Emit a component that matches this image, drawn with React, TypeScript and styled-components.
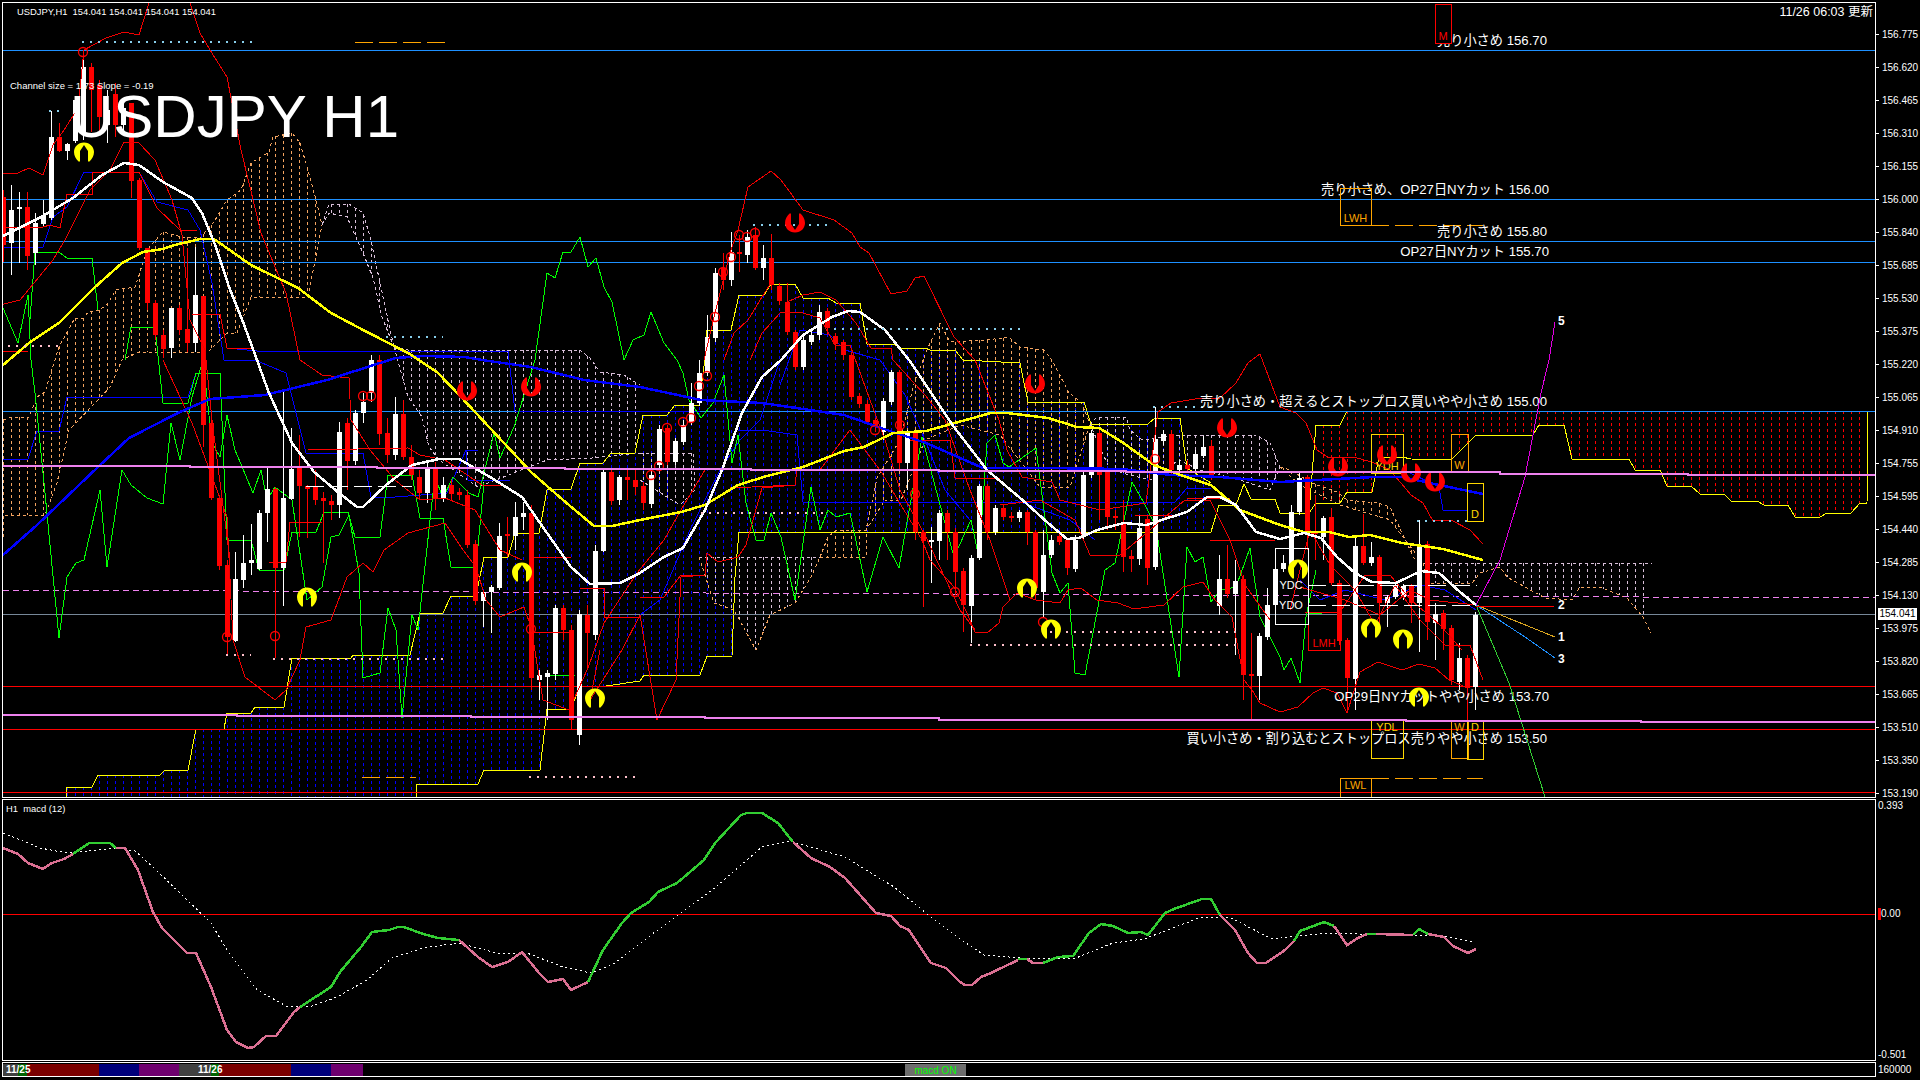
import { createGlobalStyle, styled } from "styled-components";

const UI_FONT = `"Liberation Sans", "Noto Sans CJK JP", sans-serif`;

// [white?, body top, body bottom, high, low], one bar every 8px from x = 3.5
const CANDLES: number[][] = [
  [0,197,245,190,262],[1,210,243,185,275],[1,207,208,192,263],[0,207,256,192,270],[1,223,253,213,265],[1,216,224,200,227],[1,137,218,111,220],[0,137,151,123,152],[1,144,151,143,160],[1,100,141,100,143],
  [1,67,133,50,140],[0,67,90,63,132],[0,85,117,80,133],[1,110,125,90,143],[0,94,125,83,137],[1,108,125,100,135],[0,103,181,103,198],[0,180,248,178,250],[0,248,303,248,310],[0,303,335,300,340],
  [0,335,349,330,358],[1,308,348,308,358],[0,308,330,305,335],[0,329,343,248,352],[1,295,343,247,352],[0,296,425,296,447],[0,423,498,420,500],[0,498,566,495,570],[0,565,637,560,655],[1,579,641,552,642],
  [1,563,580,535,588],[1,560,563,524,575],[1,513,569,510,570],[1,489,513,468,542],[0,489,568,487,658],[1,498,568,390,606],[1,469,499,428,500],[0,468,486,435,537],[0,486,489,485,538],[0,487,500,470,505],
  [0,498,501,492,563],[0,501,505,495,520],[1,432,505,422,518],[0,423,461,418,490],[1,413,461,410,465],[1,402,413,393,423],[1,360,393,355,402],[0,360,434,355,445],[0,433,455,418,463],[1,414,455,397,460],
  [0,414,457,400,460],[0,457,475,445,480],[0,477,493,470,500],[1,468,493,460,503],[0,468,498,462,510],[1,485,498,477,502],[0,485,494,480,500],[0,492,495,488,500],[0,495,545,490,548],[0,544,601,540,605],
  [1,592,601,590,627],[1,587,592,585,633],[1,536,588,523,590],[0,534,536,517,557],[1,517,536,502,550],[1,513,517,502,530],[0,513,678,505,690],[1,675,680,670,700],[1,673,677,670,720],[1,608,674,605,680],
  [0,608,630,605,640],[0,630,720,625,730],[1,614,735,610,745],[0,615,633,605,668],[1,551,635,545,640],[1,472,551,470,552],[0,472,501,470,505],[1,477,500,475,505],[0,477,480,470,500],[0,480,487,470,495],
  [0,486,503,482,510],[1,475,504,470,508],[1,429,465,425,468],[0,428,462,425,465],[1,441,462,438,465],[1,425,442,420,445],[1,403,422,383,425],[1,373,403,360,406],[1,337,373,315,376],[1,273,338,268,342],
  [0,268,280,253,290],[1,252,280,232,286],[0,252,254,235,272],[1,237,255,230,263],[0,235,268,227,270],[1,258,268,245,280],[0,258,285,234,290],[0,286,301,283,305],[0,302,332,283,335],[0,332,367,330,370],
  [1,340,367,335,370],[1,335,342,330,345],[1,312,335,305,340],[0,311,328,308,335],[0,336,344,333,350],[0,342,355,340,360],[0,355,397,352,400],[0,396,404,393,408],[0,404,422,400,425],[0,420,427,418,432],
  [1,401,432,398,440],[1,372,402,370,405],[0,372,463,370,470],[1,433,463,430,490],[0,433,532,430,540],[0,532,541,530,607],[1,540,541,527,583],[1,513,541,510,560],[0,513,532,510,560],[0,532,572,528,595],
  [0,571,605,568,632],[1,558,606,555,643],[1,486,558,484,560],[0,486,532,484,540],[1,508,532,505,535],[0,508,517,505,520],[0,516,518,512,522],[1,512,518,510,522],[0,512,532,510,545],[0,532,588,530,600],
  [1,555,592,530,618],[1,540,555,535,558],[0,536,542,534,545],[0,540,568,538,575],[1,540,569,535,572],[1,475,537,470,540],[1,433,475,430,478],[0,433,475,430,520],[0,472,517,470,530],[0,516,518,510,530],
  [0,522,557,500,572],[0,556,559,550,572],[1,528,559,515,565],[0,519,568,515,585],[1,439,567,407,570],[1,434,441,430,445],[0,434,470,430,475],[1,465,470,460,475],[0,465,469,460,473],[1,454,469,450,473],
  [1,447,456,436,458],[0,446,477,440,480],[1,579,606,555,615],[0,579,594,545,598],[1,581,594,560,655],[0,579,675,575,700],[0,674,676,633,720],[1,636,676,633,700],[1,605,637,588,640],[1,569,605,550,610],
  [1,563,569,555,572],[1,512,565,505,570],[1,478,512,473,515],[0,477,533,475,550],[0,532,534,495,560],[1,518,537,516,560],[0,517,583,508,585],[0,583,641,580,645],[0,640,678,638,713],[1,546,679,537,710],
  [0,546,563,514,565],[1,557,563,542,566],[0,557,603,555,625],[1,597,603,595,627],[1,586,597,584,599],[1,586,597,584,600],[0,586,603,584,623],[1,546,603,520,652],[0,544,622,541,640],[1,614,623,603,660],
  [0,613,629,610,650],[0,628,680,625,685],[1,658,682,643,690],[0,658,688,655,722],[1,615,687,612,710],
];

const CANDLE_X = (k: number) => 3.5 + 8 * k;

const SPAN_A = "66,797 66,787 92,787 98,775 160,775 165,770 188,770 196,729 224,729 227,713 251,713 255,707 284,707 292,658 351,658 353,655 410,655 420,613 443,613 451,596 476,596 484,557 508,557 515,533 539,533 547,490 571,489 580,463 603,463 611,453 635,453 643,415 667,415 675,405 699,405 705,358 707,330 731,330 739,295 764,295 771,284 795,284 803,298 828,298 836,303 860,303 867,344 893,344 901,348 926,348 930,350 955,350 963,360 1020,363 1028,402 1084,402 1091,424 1148,424 1155,418 1180,418 1187,468 1211,483";
const SPAN_B = "416,800 416,784 478,784 484,770 540,770 547,709 571,709 580,686 606,686 640,681 644,675 700,675 707,656 732,656 735,577 739,532 1211,532";
const SPAN_C = "1211,532 1219,505 1236,505 1244,484 1251,499 1275,499 1280,513 1309,513 1316,425 1340,425 1347,411 1868,411";
const SPAN_D = "1309,513 1316,503 1340,503 1347,492 1372,492 1379,457 1402,457 1411,459 1451,460 1476,435 1533,435 1539,425 1564,425 1572,459 1629,459 1635,470 1660,470 1667,486 1691,486 1700,494 1724,494 1731,501 1757,501 1764,505 1788,505 1795,517 1820,517 1827,513 1851,513 1860,503 1867,503 1868,411";

const PEACH = "#f4a460";
const THISTLE = "#d8bfd8";

// hourly cloud: vertical dashes between two outlines
const CLOUDS = [
  { color: PEACH, edge: PEACH,
    top: "3,420 12,417 29,417 37,397 45,392 59,347 75,318 84,318 88,312 100,310 108,303 116,290 135,287 147,250 163,232 182,237 200,238 214,222 227,200 241,190 251,163 269,152 273,137 292,133 300,143 308,170 316,200 322,225",
    bottom: "3,537 3,515 45,515 57,483 69,430 98,400 110,387 122,360 139,352 208,352 227,333 237,333 251,297 308,297 322,225" },
  { color: THISTLE, edge: THISTLE,
    top: "322,225 329,204 349,204 363,213 371,240 380,283 388,320 394,347",
    bottom: "322,225 329,213 347,217 363,253 373,278 382,317 394,347" },
  { color: THISTLE, edge: THISTLE,
    top: "394,347 408,350 580,350 590,358 600,372 624,375 640,385",
    bottom: "394,347 408,397 422,417 429,447 439,460 478,487 547,460 592,458 640,453" },
  { color: THISTLE, edge: THISTLE,
    top: "640,453 693,453 695,490",
    bottom: "640,480 680,505 695,490" },
  { color: THISTLE, edge: PEACH,
    top: "699,557 820,557",
    bottom: "699,557 714,603 734,610 756,650 770,615 795,603 811,577 820,557" },
  { color: PEACH, edge: PEACH,
    top: "820,557 828,537 836,530 866,530 877,478 900,440 915,380 930,343 940,323 950,342 987,340 1009,337 1020,347 1044,350 1052,360 1069,393 1081,402 1090,424",
    bottom: "820,557 866,557 866,530 885,500 901,500 925,440 960,425 1000,435 1040,487 1070,487 1090,424" },
  { color: THISTLE, edge: THISTLE,
    top: "1090,424 1097,417 1126,417 1130,430 1142,440 1179,435 1256,435 1270,443 1280,467",
    bottom: "1090,424 1110,470 1150,480 1179,460 1200,470 1240,480 1270,490 1280,467" },
  { color: PEACH, edge: PEACH,
    top: "1280,467 1290,470 1312,483 1337,492 1347,500 1378,503 1390,507 1402,533 1415,560 1423,563",
    bottom: "1280,467 1300,485 1340,505 1390,520 1423,563" },
  { color: THISTLE, edge: PEACH,
    top: "1423,563 1652,563",
    bottom: "1423,563 1427,583 1472,583 1480,573 1500,567 1507,577 1525,587 1545,598 1572,600 1580,587 1602,588 1627,598 1643,617 1651,633" },
];

const RED_THIN = [
  "3,173 18,173 29,168 43,175 53,145 64,130 78,108 84,50 106,38 124,32 139,35 149,3",
  "190,3 200,33 210,50 227,77 241,150 249,183 261,233 286,293 300,360 322,375 349,378 351,420 370,450 395,480 420,500 445,498 475,510 500,550 522,560",
  "0,305 20,300 53,260 66,238 90,190 110,170 124,142 138,142 155,160 172,200 182,235 190,320 205,350 212,420 230,560",
  "163,360 192,423 227,517 233,640 245,677 275,700 286,690 300,660 306,627 331,620 347,577 363,563 373,572 384,550 408,533 445,523 461,547 476,567 486,600 500,617 524,607 531,627 543,700 569,710 588,668 604,623 637,573 664,540 681,510 705,470",
  "600,650 590,700 622,650 640,615 657,720 676,680 681,577 705,575 707,553 718,562 738,557 746,545 762,488 795,485 797,470 820,470 850,430 880,470 922,540 930,560 954,587 967,613 975,632 987,633 999,623 1003,607 1017,593 1036,600 1060,603 1068,590 1081,588 1097,600 1118,603 1134,609 1164,605 1183,587 1203,582 1215,600 1232,617 1244,680 1252,690 1260,703 1280,712 1298,707 1313,693 1323,688 1337,693 1347,713 1360,672 1378,662 1402,670 1419,664 1435,668 1449,680 1468,688",
  "704,360 715,313 730,253 738,230 748,187 771,171 781,180 803,210 834,220 852,233 860,247 869,253 891,294 907,291 915,278 924,276 954,337 975,360 999,420 1007,450 1022,477 1052,482 1060,500 1100,510 1146,503 1158,412 1171,403 1195,399 1220,398 1236,383 1248,363 1260,354 1280,407 1296,413 1306,423 1317,450 1329,458 1353,457 1372,462 1390,470 1411,495 1423,503 1433,521 1451,520 1470,530 1483,544",
  "724,360 734,333 748,320 762,297 771,283",
  "750,360 762,333 781,312 803,313 820,318 835,345 850,345 870,400 885,440 900,490 925,535 960,610 975,630",
  "787,302 803,295 820,292 836,300 856,323 871,348 891,348 893,360 925,395 945,420 970,490 990,540 1010,600",
  "1000,505 1040,500 1075,520 1090,555 1120,555 1150,530 1185,500 1210,500 1230,540 1245,585 1270,620",
  "1290,610 1310,530 1330,565 1355,590 1375,625 1395,585 1420,620 1445,645 1470,645 1483,680",
  "1305,612 1340,612 1365,575 1390,575 1411,600 1440,625 1462,650",
  "1300,587 1345,600 1380,615 1410,590 1430,600 1476,605",
];

const RED_STEP = [
  "3,227 43,227 50,225 60,228 67,194 92,194 92,172 139,172 157,208 180,230 197,230",
  "3,351 28,351",
  "192,314 220,314 227,348 251,348",
  "269,562 286,562 290,522 322,522",
  "308,450 408,448 420,455 445,460 482,485 506,485",
  "533,557 571,557",
  "531,632 570,632",
  "580,588 604,588 604,617 640,617",
  "640,597 664,597 681,575 705,575",
  "730,488 795,485",
  "910,440 950,440 955,478 1000,478",
  "1135,515 1175,515",
  "1187,498 1230,498",
  "1210,540 1275,540",
];

const BLUE_THIN = [
  "3,247 43,247 53,217 67,207 84,172 139,172 157,202 188,210 200,230 212,283 224,360 255,360 286,373 306,453 363,453 371,497 395,497 447,493 466,450 478,450",
  "466,450 468,480 510,480",
  "780,360 760,420 740,440 720,470 690,530 660,600 640,615",
  "780,385 800,330 830,335 845,350 880,360 905,395",
  "905,395 925,440 945,490 970,520",
  "1015,500 1070,520 1095,540",
  "1300,580 1320,600 1345,590 1385,600 1420,585 1445,590 1476,610",
];

const BLUE_STEP = [
  "3,459 28,459 37,431 59,431 67,397 188,397 196,373 220,373",
  "227,348 257,351 508,351 515,411 700,411",
  "738,430 762,430 797,435 803,502 1175,502 1187,488 1211,488",
  "1404,470 1439,487 1443,510 1467,510",
];

const GREEN_THIN = "3,308 18,343 28,295 31,360 35,393 45,493 59,638 67,577 76,563 84,560 100,490 107,567 122,470 131,485 147,498 163,504 171,423 180,460 192,397 203,360 212,443 220,457 227,415 235,450 253,493 261,470 267,500 275,487 292,500 307,600 322,587 331,537 339,535 349,515 359,573 363,678 380,673 388,608 396,630 402,718 412,615 418,630 433,493 435,477 443,498 453,477 469,493 478,497 494,433 500,458 514,427 535,360 547,273 555,278 563,252 571,252 580,237 588,267 596,258 604,287 612,302 624,360 633,340 644,335 651,312 664,343 677,360 683,373 689,400 701,418 713,403 724,375 732,463 738,435 746,503 756,540 764,540 771,513 781,537 795,600 811,487 820,530 828,510 836,517 850,513 867,592 883,537 899,568 922,437 954,557 971,520 979,558 987,443 995,435 1003,463 1009,467 1036,448 1052,573 1060,593 1068,583 1075,673 1085,675 1105,570 1115,563 1132,482 1144,503 1156,527 1179,677 1187,547 1195,562 1203,557 1211,602 1220,590 1236,587 1250,548 1260,617 1280,657 1284,670 1291,658 1300,683 1306,617 1316,570";

const GREEN_STEP = [
  "29,333 35,252 59,252 67,258 92,258 98,310",
  "131,327 155,327 163,403 188,403 196,373 220,373 227,540 251,540 259,570 284,570 292,532 316,532 324,512 348,512 355,537 380,537 388,475 412,475 420,518 443,518 451,567 476,567 484,483",
  "125,360 131,327",
  "546,675 575,675",
  "1308,613 1322,613",
];

const WHITE_MA = "3,236 41,217 73,198 102,175 124,163 139,165 163,182 192,198 202,213 216,247 229,287 243,322 257,360 269,393 292,443 314,472 339,493 357,507 363,507 386,485 412,465 439,459 459,459 490,477 522,497 547,533 571,567 590,584 620,583 640,573 664,557 683,548 705,510 722,470 742,413 762,377 781,360 803,335 832,317 848,311 860,312 885,330 909,360 934,397 954,427 987,470 1026,503 1048,523 1067,539 1079,538 1097,530 1124,523 1146,525 1171,517 1187,512 1207,497 1220,497 1236,505 1256,532 1280,539 1304,533 1321,538 1337,557 1355,573 1372,582 1396,583 1421,571 1439,573 1460,592 1476,605";
const YELLOW_MA = "3,365 29,343 59,323 94,288 122,263 143,252 163,249 171,246 200,239 214,239 251,265 298,288 331,313 367,332 408,353 437,372 461,397 490,428 531,472 563,500 594,526 612,526 640,520 681,512 705,505 738,485 767,476 803,467 844,451 864,447 893,433 926,431 962,421 991,413 1007,413 1048,418 1077,427 1099,428 1122,442 1154,465 1183,476 1211,485 1240,510 1280,525 1304,532 1329,532 1349,537 1370,535 1402,543 1443,549 1483,560";
const BLUE_MA = "3,555 37,525 98,467 129,438 180,412 210,399 265,395 327,380 380,363 396,358 424,356 465,357 482,360 531,367 584,380 640,387 701,400 762,403 844,415 881,428 926,443 983,468 1048,468 1122,469 1171,475 1220,477 1280,482 1374,477 1402,477 1439,485 1483,494";

const LEVELS = [
  { y: 50.5, color: "#1e90ff" }, { y: 199.5, color: "#1e90ff" }, { y: 241.5, color: "#1e90ff" },
  { y: 262.5, color: "#1e90ff" }, { y: 411.5, color: "#1e90ff" }, { y: 614.5, color: "#778899" },
  { y: 686.5, color: "#ff0000" }, { y: 729.5, color: "#ff0000" }, { y: 792.5, color: "#ff0000" },
];

const VIOLET_UPPER = "3,466 190,466 190,467 377,467 377,468 565,468 565,469 751,469 751,470 939,470 939,471 1126,471 1126,472 1500,472 1500,474 1688,474 1688,475 1875,475";
const VIOLET_LOWER = "3,715 237,715 237,716 471,716 471,717 705,717 705,718 939,718 939,720 1406,720 1406,721 1641,721 1641,722 1875,722";

const SKY_DOTS = ["82,42 252,42", "49,111 59,111", "386,337 443,337", "753,225 827,225", "834,329 1020,329", "1153,407 1211,407", "1417,521 1467,521"];
const PINK_DOTS = ["8,346 59,346", "226,655 251,655", "273,659 443,659", "701,513 824,513", "1050,632 1236,632", "970,645 1236,645", "529,777 637,777"];
const ORANGE_DASHES = ["355,42 445,42", "362,777 416,777", "1371,225 1483,225", "1371,778 1483,778"];
const WHITE_DASHES = ["306,486 412,486", "1308,585 1477,585", "1308,605 1477,605"];

const YELLOW_MARKS = [[84,152],[307,597],[522,572],[595,698],[1027,588],[1051,629],[1371,628],[1403,639],[1298,569],[1419,697]];
const RED_MARKS = [[795,223],[467,391],[531,387],[1035,384],[1227,428],[1338,467],[1387,455],[1411,473],[1435,482]];
const RINGS = [[83,52],[715,317],[723,272],[731,257],[739,235],[747,237],[755,233],[227,637],[275,636],[363,396],[371,396],[531,629],[651,475],[659,466],[667,428],[683,422],[691,418],[699,386],[707,376],[875,430],[900,425],[915,494],[955,592],[1043,622],[1155,459]];

const BOXES = [
  { x: 1435, y: 4, w: 16, h: 39, color: "#ff0000", label: "M", fill: "#000" },
  { x: 1340, y: 188, w: 31, h: 37, color: "#ffa500", label: "LWH" },
  { x: 1340, y: 778, w: 31, h: 30, color: "#ffa500", label: "LWL", top: true },
  { x: 1371, y: 434, w: 32, h: 39, color: "#ffd700", label: "YDH" },
  { x: 1451, y: 434, w: 17, h: 38, color: "#ffa500", label: "W" },
  { x: 1467, y: 483, w: 16, h: 38, color: "#ffd700", label: "D" },
  { x: 1371, y: 720, w: 32, h: 38, color: "#ffd700", label: "YDL", top: true },
  { x: 1451, y: 720, w: 17, h: 38, color: "#ffa500", label: "W", top: true },
  { x: 1467, y: 720, w: 16, h: 39, color: "#ffd700", label: "D", top: true },
  { x: 1308, y: 612, w: 32, h: 38, color: "#ff0000", label: "LMH" },
  { x: 1275, y: 548, w: 33, h: 76, color: "#ffffff", label: "" },
];

const NOTES = [
  { x: 1547, y: 40, text: "売り小さめ 156.70" },
  { x: 1549, y: 189, text: "売り小さめ、OP27日NYカット 156.00" },
  { x: 1547, y: 231, text: "売り小さめ 155.80" },
  { x: 1549, y: 251, text: "OP27日NYカット 155.70" },
  { x: 1547, y: 401, text: "売り小さめ・超えるとストップロス買いやや小さめ 155.00" },
  { x: 1549, y: 696, text: "OP29日NYカットやや小さめ 153.70" },
  { x: 1547, y: 738, text: "買い小さめ・割り込むとストップロス売りやや小さめ 153.50" },
  { x: 1493, y: 804, text: "割り込むとストップロス売りやや小さめ" },
];

const PROJECTIONS = [
  { points: "1476,605 1509,683 1545,797", color: "#32cd32" },
  { points: "1476,605 1500,560 1525,477 1541,393 1549,360 1555,322", color: "#e000e0" },
  { points: "1476,605 1555,637", color: "#daa520" },
  { points: "1476,605 1525,637 1555,658", color: "#1e90ff" },
  { points: "1476,606 1554,606", color: "#ff0000" },
];

const WAVE_LABELS = [
  { x: 1558, y: 325, n: "5" }, { x: 1558, y: 609, n: "2" }, { x: 1558, y: 641, n: "1" }, { x: 1558, y: 663, n: "3" },
];

const PRICES = ["156.775","156.620","156.465","156.310","156.155","156.000","155.840","155.685","155.530","155.375","155.220","155.065","154.910","154.755","154.595","154.440","154.285","154.130","153.975","153.820","153.665","153.510","153.350","153.190"];

const MACD_GREEN = "#32cd32";
const MACD_PINK = "#db7093";
const MACD_SEGMENTS = [
  { c: MACD_PINK, p: "3,848 18,854 28,863 43,869 52,863 64,859 73,854" },
  { c: MACD_GREEN, p: "73,854 89,843 110,843 116,848" },
  { c: MACD_PINK, p: "116,848 125,848 138,870 153,912 162,928 187,953 196,953 211,987 227,1030 236,1042 248,1048 254,1047 266,1036 276,1036 294,1012 300,1007" },
  { c: MACD_GREEN, p: "300,1007 331,987 340,972 361,947 372,932 389,930 398,927 404,927 423,934 438,938 459,940" },
  { c: MACD_PINK, p: "459,940 478,957 492,967 508,962 522,952 539,973 548,982 563,979 571,990 588,982" },
  { c: MACD_GREEN, p: "588,982 603,950 622,923 631,913 649,902 658,892 677,883 704,860 716,842 741,815 747,813 762,813 778,823 793,842" },
  { c: MACD_PINK, p: "793,842 811,858 830,867 845,878 876,913 891,916 900,926 909,930 931,963 946,968 960,982 965,985 972,985 981,977 991,973 1018,960" },
  { c: MACD_GREEN, p: "1018,959 1027,959" },
  { c: MACD_PINK, p: "1027,959 1033,963 1043,963" },
  { c: MACD_GREEN, p: "1043,963 1058,957 1073,956 1089,933 1101,924 1113,926 1128,933 1141,932 1148,935 1165,913 1174,909 1202,899 1211,899 1220,915" },
  { c: MACD_PINK, p: "1220,915 1235,930 1248,953 1257,963 1266,963 1285,950 1294,941" },
  { c: MACD_GREEN, p: "1294,941 1300,931 1324,922 1334,926" },
  { c: MACD_PINK, p: "1334,926 1347,945 1358,938 1367,934" },
  { c: MACD_GREEN, p: "1367,934 1376,934" },
  { c: MACD_PINK, p: "1376,934 1413,935" },
  { c: MACD_GREEN, p: "1413,935 1419,929 1428,934" },
  { c: MACD_PINK, p: "1428,934 1444,937 1453,946 1468,953 1476,949" },
];
const MACD_SIGNAL = "3,833 40,848 67,853 116,848 135,851 153,867 184,897 211,923 227,950 257,990 288,1007 312,1006 337,997 367,980 392,958 423,948 459,943 496,953 527,953 563,967 591,973 612,965 655,932 716,887 762,847 790,841 845,857 894,887 931,917 960,939 984,955 1033,959 1076,958 1113,943 1144,939 1199,918 1229,917 1272,939 1327,933 1389,935 1438,935 1473,942";

const SESSIONS = [
  { w: 15, c: "#404040" }, { w: 9, c: "#006400" }, { w: 72, c: "#7a0000" }, { w: 40, c: "#00007a" },
  { w: 40, c: "#6e006e" }, { w: 32, c: "#404040" }, { w: 8, c: "#006400" }, { w: 72, c: "#7a0000" },
  { w: 40, c: "#00007a" }, { w: 32, c: "#6e006e" },
];

function parsePoints(points: string) {
  return points.split(" ").map((p) => p.split(",").map(Number));
}

// y of a polyline at x
function yAt(line: number[][], x: number) {
  for (let i = 1; i < line.length; i++) {
    const [x0, y0] = line[i - 1];
    const [x1, y1] = line[i];
    if (x >= x0 && x <= x1) return x1 === x0 ? y1 : y0 + ((y1 - y0) * (x - x0)) / (x1 - x0);
  }
  return x < line[0][0] ? line[0][1] : line[line.length - 1][1];
}

function cloudPath(top: string, bottom: string, from: number, to: number) {
  const t = parsePoints(top);
  const b = parsePoints(bottom);
  let d = "";
  for (let k = 0; k < 235; k++) {
    const x = CANDLE_X(k);
    if (x < from || x > to) continue;
    d += `M${x} ${yAt(t, x)}V${yAt(b, x)}`;
  }
  return d;
}

function cloudRange(c: { top: string; bottom: string }) {
  const t = parsePoints(c.top);
  const b = parsePoints(c.bottom);
  return [Math.max(t[0][0], b[0][0]), Math.min(t[t.length - 1][0], b[b.length - 1][0])];
}

function Line({ points, color, width = 1 }: { points: string; color: string; width?: number }) {
  return <Trace points={points} $c={color} $w={width} />;
}

function MainChart() {
  const kumoBlue = cloudPath(SPAN_A, SPAN_B + " 1212,532", 66, 1211);
  const kumoRed = cloudPath(SPAN_C, SPAN_D, 1316, 1868);
  return (
    <ChartSvg viewBox="3 3 1872 794" width="1872" height="794">
      <CloudDashes d={kumoBlue} $c="#0000ff" />
      <CloudDashes d={kumoRed} $c="#ff0000" />
      {CLOUDS.map((c, i) => {
        const [from, to] = cloudRange(c);
        return (
          <g key={i}>
            <CloudDashes d={cloudPath(c.top, c.bottom, from, to)} $c={c.color} />
            <DashedTrace points={c.top} $c={c.edge === PEACH && c.color === THISTLE ? THISTLE : c.edge} />
            <DashedTrace points={c.bottom} $c={c.edge} />
          </g>
        );
      })}
      <Line points={SPAN_A} color="#ffff00" />
      <Line points={SPAN_B} color="#ffff00" />
      <Line points={SPAN_C} color="#ffff00" />
      <Line points={SPAN_D} color="#ffff00" />

      {LEVELS.map((l) => (
        <Line key={l.y} points={`3,${l.y} 1875,${l.y}`} color={l.color} />
      ))}
      <VioletDash points="3,590 1875,598" />

      {BLUE_THIN.map((p) => <Line key={p} points={p} color="#0000ff" />)}
      {BLUE_STEP.map((p) => <Line key={p} points={p} color="#0000ff" />)}
      <Line points={GREEN_THIN} color="#00ff00" />
      {GREEN_STEP.map((p) => <Line key={p} points={p} color="#00ff00" />)}

      {CANDLES.map(([white, top, bottom, high, low], k) => {
        const x = CANDLE_X(k);
        const c = white ? "#ffffff" : "#ff0000";
        return (
          <g key={k}>
            <Line points={`${x},${high} ${x},${low}`} color={c} />
            <CandleBody x={x - 2.5} y={top} width={5} height={Math.max(bottom - top, 2)} fill={c} />
          </g>
        );
      })}

      {RED_THIN.map((p) => <Line key={p} points={p} color="#f00000" />)}
      {RED_STEP.map((p) => <Line key={p} points={p} color="#ff0000" />)}

      <Line points={BLUE_MA} color="#0000ff" width={2.5} />
      <Line points={YELLOW_MA} color="#ffff00" width={2.5} />
      <Line points={WHITE_MA} color="#ffffff" width={2.5} />

      {SKY_DOTS.map((p) => <DotTrace key={p} points={p} $c="#87ceeb" />)}
      {PINK_DOTS.map((p) => <DotTrace key={p} points={p} $c="#ffc0cb" />)}
      {ORANGE_DASHES.map((p) => <LongDash key={p} points={p} $c="#ffa500" />)}
      {WHITE_DASHES.map((p) => <LongDash key={p} points={p} $c="#ffffff" />)}

      {RINGS.map(([x, y]) => <Ring key={`${x}-${y}`} cx={x} cy={y} r={4.5} />)}

      {NOTES.map((n) => (
        <NoteText key={n.text} x={n.x} y={n.y + 4.5}>{n.text}</NoteText>
      ))}

      {PROJECTIONS.map((p) => <Line key={p.points} points={p.points} color={p.color} />)}
      {WAVE_LABELS.map((w) => <WaveText key={w.n} x={w.x} y={w.y}>{w.n}</WaveText>)}

      {BOXES.map((b) => (
        <g key={`${b.label}-${b.x}-${b.y}`}>
          <BoxFrame x={b.x + 0.5} y={b.y + 0.5} width={b.w} height={b.h} $c={b.color} $fill={b.fill} />
          {b.label && (
            <BoxText x={b.x + b.w / 2} y={b.top ? b.y + 11 : b.y + b.h - 3} $c={b.color}>
              {b.label}
            </BoxText>
          )}
        </g>
      ))}
      <WhiteTag x={1291} y={589}>YDC</WhiteTag>
      <WhiteTag x={1291} y={609}>YDO</WhiteTag>

      {YELLOW_MARKS.map(([x, y]) => (
        <Mark key={`${x}-${y}`} d={ARCH} transform={`translate(${x} ${y})`} $c="#ffff00" />
      ))}
      {RED_MARKS.map(([x, y]) => (
        <Mark key={`${x}-${y}`} d={ARCH} transform={`translate(${x} ${y}) scale(1 -1)`} $c="#ff0000" />
      ))}

      <Line points={VIOLET_UPPER} color="#ee82ee" width={2} />
      <Line points={VIOLET_LOWER} color="#ee82ee" width={2} />
    </ChartSvg>
  );
}

// horseshoe arrow used for the swing marks, flipped for the red ones
const ARCH = "M0 -9.5C-6 -9.5 -10 -5 -10 0C-10 4 -8 7 -5.5 9.5L-4 9.5L-4 -1L0 -7L4 -1L4 9.5L5.5 9.5C8 7 10 4 10 0C10 -5 6 -9.5 0 -9.5Z";

function App() {
  return (
    <>
      <GlobalStyle />
      <Terminal>
        <Pane $h={796}>
          <Plot>
            <MainChart />
            <SymbolCaption>USDJPY,H1  154.041 154.041 154.041 154.041</SymbolCaption>
            <ChannelInfo>Channel size = 1.73 Slope = -0.19</ChannelInfo>
            <BigSymbol>USDJPY H1</BigSymbol>
            <UpdatedAt>11/26 06:03 更新</UpdatedAt>
          </Plot>
          <PriceAxis>
            {PRICES.map((p) => <PriceLabel key={p}>{p}</PriceLabel>)}
            <BidTag>154.041</BidTag>
          </PriceAxis>
        </Pane>
        <Pane $h={262}>
          <Plot>
            <ChartSvg viewBox="3 800 1872 260" width="1872" height="260">
              <Line points="3,914.5 1875,914.5" color="#ff0000" />
              <SignalDots points={MACD_SIGNAL} />
              {MACD_SEGMENTS.map((s) => <Line key={s.p} points={s.p} color={s.c} width={2.5} />)}
            </ChartSvg>
            <MacdCaption>H1  macd (12)</MacdCaption>
          </Plot>
          <MacdAxis>
            <ScaleLabel>0.393</ScaleLabel>
            <ZeroLabel>0.00</ZeroLabel>
            <ScaleLabel>-0.501</ScaleLabel>
          </MacdAxis>
        </Pane>
        <Pane $h={15}>
          <SessionPlot>
            <SessionBar>
              {SESSIONS.map((s, i) => <Session key={i} $w={s.w} $c={s.c} />)}
              <SessionDate $x={3}>11/25</SessionDate>
              <SessionDate $x={195}>11/26</SessionDate>
            </SessionBar>
            <MacdButton>macd ON</MacdButton>
          </SessionPlot>
          <StripAxis>160000</StripAxis>
        </Pane>
      </Terminal>
    </>
  );
}

const GlobalStyle = createGlobalStyle`
  html, body {
    margin: 0;
    background: #000;
    overflow: hidden;
  }
`;

const Terminal = styled.div`
  display: flex;
  flex-direction: column;
  gap: 1px;
  width: 1920px;
  height: 1080px;
  box-sizing: border-box;
  padding: 2px 0 0 2px;
  background: #000;
  color: #fff;
  font-family: ${UI_FONT};
`;

const Pane = styled.div<{ $h: number }>`
  display: flex;
  flex: none;
  height: ${(p) => p.$h}px;
`;

const Plot = styled.div`
  position: relative;
  flex: none;
  width: 1874px;
  box-sizing: border-box;
  border: 1px solid #fff;
  overflow: hidden;
`;

const ChartSvg = styled.svg`
  display: block;
`;

const Trace = styled.polyline<{ $c: string; $w: number }>`
  fill: none;
  stroke: ${(p) => p.$c};
  stroke-width: ${(p) => p.$w};
  shape-rendering: crispEdges;
`;

const DashedTrace = styled.polyline<{ $c: string }>`
  fill: none;
  stroke: ${(p) => p.$c};
  stroke-width: 1;
  stroke-dasharray: 3 3;
  shape-rendering: crispEdges;
`;

const DotTrace = styled.polyline<{ $c: string }>`
  fill: none;
  stroke: ${(p) => p.$c};
  stroke-width: 2;
  stroke-dasharray: 2 6;
  shape-rendering: crispEdges;
`;

const LongDash = styled.polyline<{ $c: string }>`
  fill: none;
  stroke: ${(p) => p.$c};
  stroke-width: 1;
  stroke-dasharray: 18 6;
  shape-rendering: crispEdges;
`;

const VioletDash = styled.polyline`
  fill: none;
  stroke: #ee82ee;
  stroke-width: 1;
  stroke-dasharray: 6 4;
  shape-rendering: crispEdges;
`;

const SignalDots = styled.polyline`
  fill: none;
  stroke: #fff;
  stroke-width: 1;
  stroke-dasharray: 2 3;
  shape-rendering: crispEdges;
`;

const CloudDashes = styled.path<{ $c: string }>`
  fill: none;
  stroke: ${(p) => p.$c};
  stroke-width: 1;
  stroke-dasharray: 3 3;
  shape-rendering: crispEdges;
`;

const CandleBody = styled.rect`
  shape-rendering: crispEdges;
`;

const Ring = styled.circle`
  fill: none;
  stroke: #ff0000;
  stroke-width: 1.3;
`;

const Mark = styled.path<{ $c: string }>`
  fill: ${(p) => p.$c};
`;

const BoxFrame = styled.rect<{ $c: string; $fill?: string }>`
  fill: ${(p) => p.$fill ?? "none"};
  stroke: ${(p) => p.$c};
  stroke-width: 1;
  shape-rendering: crispEdges;
`;

const BoxText = styled.text<{ $c: string }>`
  fill: ${(p) => p.$c};
  font-size: 11px;
  text-anchor: middle;
`;

const WhiteTag = styled.text`
  fill: #fff;
  font-size: 11px;
  text-anchor: middle;
`;

const NoteText = styled.text`
  fill: #fff;
  font-size: 13.2px;
  text-anchor: end;
`;

const WaveText = styled.text`
  fill: #fff;
  font-size: 12px;
  font-weight: bold;
`;

const SymbolCaption = styled.div`
  position: absolute;
  top: 3px;
  left: 14px;
  font-size: 9.4px;
  line-height: 12px;
  white-space: pre;
`;

const MacdCaption = styled(SymbolCaption)`
  top: 3px;
  left: 3px;
`;

const ChannelInfo = styled.div`
  position: absolute;
  top: 77px;
  left: 7px;
  font-size: 9.5px;
  line-height: 12px;
  white-space: pre;
`;

const BigSymbol = styled.div`
  position: absolute;
  top: 80px;
  left: 67px;
  font-size: 60px;
  line-height: 68px;
  white-space: pre;
`;

const UpdatedAt = styled.div`
  position: absolute;
  top: 2px;
  right: 2px;
  font-size: 12.5px;
  line-height: 14px;
`;

const PriceAxis = styled.div`
  position: relative;
  display: flex;
  flex-direction: column;
  flex: none;
  padding-top: 16px;
`;

const PriceLabel = styled.div`
  position: relative;
  height: 33.04px;
  line-height: 33px;
  padding-left: 6px;
  font-size: 10px;

  &::before {
    content: "";
    position: absolute;
    top: 16px;
    left: 0;
    width: 3px;
    height: 1px;
    background: #fff;
  }
`;

const BidTag = styled.div`
  position: absolute;
  top: 606px;
  left: 2px;
  width: 39px;
  height: 12px;
  background: #fff;
  color: #000;
  font-size: 10px;
  line-height: 12px;
  text-align: center;
`;

const MacdAxis = styled.div`
  display: flex;
  flex-direction: column;
  justify-content: space-between;
  flex: none;
  padding: 1px 0 0 2px;
  height: 261px;
`;

const ScaleLabel = styled.div`
  height: 12px;
  line-height: 12px;
  font-size: 10px;
`;

const ZeroLabel = styled(ScaleLabel)`
  position: relative;
  top: -17px;
  border-left: 3px solid #ff0000;
`;

const SessionPlot = styled(Plot)`
  display: flex;
  align-items: center;
  padding: 1px 0;
`;

const SessionBar = styled.div`
  position: relative;
  display: flex;
  width: 902px;
  height: 12px;
`;

const Session = styled.div<{ $w: number; $c: string }>`
  width: ${(p) => p.$w}px;
  height: 100%;
  background: ${(p) => p.$c};
`;

const SessionDate = styled.span<{ $x: number }>`
  position: absolute;
  top: 0;
  left: ${(p) => p.$x}px;
  font-size: 10px;
  font-weight: bold;
  line-height: 12px;
`;

const MacdButton = styled.div`
  width: 61px;
  height: 12px;
  background: #6e6e6e;
  color: #00ff00;
  font-size: 10px;
  line-height: 14px;
  text-align: center;
  overflow: hidden;
`;

const StripAxis = styled.div`
  flex: none;
  padding: 1px 0 0 2px;
  font-size: 10px;
  line-height: 13px;
`;

export default App;
